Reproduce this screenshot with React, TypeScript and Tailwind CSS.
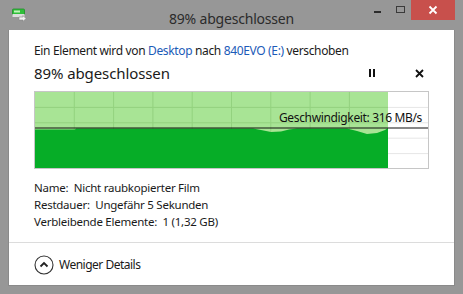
import React from "react";

const font = { fontFamily: '"Noto Sans", "Open Sans", sans-serif' };

function Chart() {
  const W = 393;
  const H = 76;
  const fillW = 353;
  const lineY = 36;
  const verts = Array.from({ length: 9 }, (_, i) => (i + 1) * (W / 10));
  const hors = [15.4, 30.8, 46.2, 61.6];
  const top =
    `M0,${H} L0,37.5 L40,37.5 L41,36.6 L218,36.6 L226,38 L236,40 L246,39.5 L254,37.5 L262,36.6 ` +
    `L312,36.6 L322,39 L332,42 L342,41 L350,38 L${fillW},36 L${fillW},${H} Z`;
  return (
    <div className="border border-[#c6c6c6] w-[395px] h-[78px]">
      <svg width={W} height={H} viewBox={`0 0 ${W} ${H}`} className="block">
        <rect x="0" y="0" width={W} height={H} fill="#ffffff" />
        {hors.map((y) => (
          <line key={"h" + y} x1={0} x2={W} y1={y} y2={y} stroke="#e6e6e6" strokeWidth="1" />
        ))}
        <rect x="0" y="0" width={fillW} height={H} fill="#a8e495" />
        {verts
          .filter((x) => x < fillW)
          .map((x) => (
            <line key={"v" + x} x1={x} x2={x} y1={0} y2={H} stroke="#93d27f" strokeWidth="1" />
          ))}
        {hors.map((y) => (
          <line key={"hg" + y} x1={0} x2={fillW} y1={y} y2={y} stroke="#93d27f" strokeWidth="1" />
        ))}
        <path d={top} fill="#06ad27" />
        <line x1="0" x2={W} y1={lineY} y2={lineY} stroke="#111" strokeWidth="1.2" />
        <text
          x={W - 6}
          y={30}
          textAnchor="end"
          fontSize="12"
          fill="#111"
          style={{ ...font, letterSpacing: "-0.35px" }}
        >
          Geschwindigkeit: 316 MB/s
        </text>
      </svg>
    </div>
  );
}

export default function App() {
  return (
    <div className="w-[463px] h-[294px] bg-[#979797] flex flex-col text-[#1a1a1a]" style={font}>
      {/* Title bar */}
      <div className="h-[30px] grid grid-cols-[1fr_auto_1fr] items-start shrink-0">
        <div className="pl-[12px] pt-[8px]">
          <svg width="15" height="14" viewBox="0 0 15 14">
            <rect x="0.5" y="1" width="12" height="6" rx="1" fill="#2fbf3a" stroke="#1f8f2a" strokeWidth="0.8" />
            <rect x="2" y="2.5" width="6" height="2" fill="#bff5b8" />
            <rect x="0.5" y="6" width="12" height="3" fill="#dcdcdc" />
            <path d="M7 9 L11 9 L11 7.5 L14 10.5 L11 13.5 L11 12 L7 12 Z" fill="#f2f2f2" stroke="#888" strokeWidth="0.6" />
          </svg>
        </div>
        <div className="pt-[6px]">
          <span className="text-[14px] tracking-[-0.2px] text-[#2b2b2b] leading-[20px] whitespace-nowrap">
            89% abgeschlossen
          </span>
        </div>
        <div className="flex items-start justify-end">
          <div className="w-[24px] h-[20px] flex items-center justify-center">
            <div className="w-[7px] h-[2px] bg-[#2b2b2b] mt-[4px]" />
          </div>
          <div className="w-[22px] h-[20px] flex items-center justify-center">
            <div className="w-[9px] h-[7px] border border-[#3a3a3a] mt-[-2px]" />
          </div>
          <div className="w-[44px] h-[20px] bg-[#c8504c] flex items-center justify-center mr-[8px]">
            <svg width="10" height="10" viewBox="0 0 10 10">
              <path d="M1.5 1.5 L8.5 8.5 M8.5 1.5 L1.5 8.5" stroke="#fff" strokeWidth="1.8" />
            </svg>
          </div>
        </div>
      </div>

      {/* Content */}
      <div className="mx-[8px] mb-[8px] flex-1 bg-white border border-[#8a8a8a] border-t-0 flex flex-col">
        <div className="pl-[25px] pr-[26px] pt-[13px]">
          <div className="text-[12px] tracking-[-0.35px] leading-[16px] whitespace-nowrap">
            Ein Element wird von <span className="text-[#1c5bb8]">Desktop</span> nach{" "}
            <span className="text-[#1c5bb8]">840EVO (E:)</span> verschoben
          </div>
          <div className="flex items-center mt-[4px] h-[20px]">
            <div className="text-[15px] tracking-[-0.1px] leading-[20px] flex-1">89% abgeschlossen</div>
            <div className="flex gap-[2px] mr-[40px]">
              <div className="w-[2px] h-[8px] bg-[#111]" />
              <div className="w-[2px] h-[8px] bg-[#111]" />
            </div>
            <svg width="9" height="9" viewBox="0 0 9 9" className="mr-[4px]">
              <path d="M1 1 L8 8 M8 1 L1 8" stroke="#111" strokeWidth="1.8" />
            </svg>
          </div>
          <div className="mt-[8px]">
            <Chart />
          </div>
          <div className="mt-[10px] text-[11.5px] tracking-[-0.25px] leading-[17px]">
            <div>Name:&nbsp; Nicht raubkopierter Film</div>
            <div>Restdauer:&nbsp; Ungefähr 5 Sekunden</div>
            <div>Verbleibende Elemente:&nbsp; 1 (1,32 GB)</div>
          </div>
        </div>
        <div className="mt-[12px] border-t border-[#dcdcdc]" />
        <div className="pl-[25px] pt-[12px] flex items-center gap-[5px]">
          <svg width="20" height="20" viewBox="0 0 20 20">
            <circle cx="10" cy="10" r="9" fill="none" stroke="#333" strokeWidth="1.1" />
            <path d="M6.5 11.5 L10 8 L13.5 11.5" fill="none" stroke="#222" strokeWidth="1.8" />
          </svg>
          <span className="text-[12px] tracking-[-0.5px] leading-[18px]">Weniger Details</span>
        </div>
      </div>
    </div>
  );
}
